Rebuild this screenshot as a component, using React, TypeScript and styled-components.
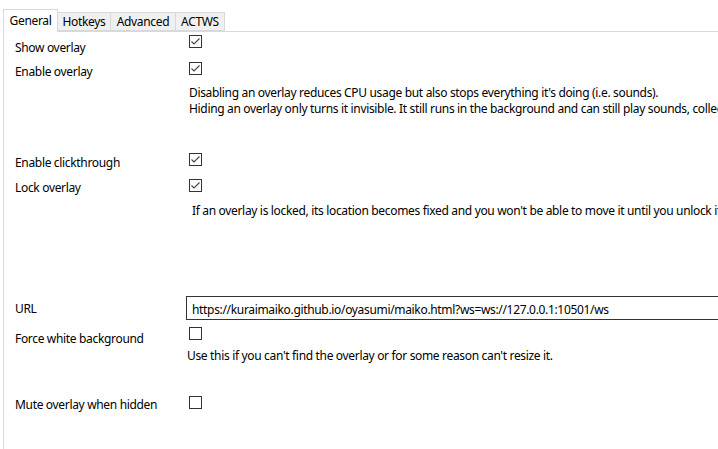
import React from "react";
import styled, { createGlobalStyle } from "styled-components";

const Global = createGlobalStyle`
  html, body { margin: 0; padding: 0; background: #ffffff; }
  body {
    font-family: "Noto Sans", "Open Sans", sans-serif;
    font-size: 12px;
    letter-spacing: -0.33px;
    color: #000;
    overflow: hidden;
  }
`;

const Window = styled.div`
  width: 718px;
  height: 449px;
  overflow: hidden;
  display: flex;
  flex-direction: column;
`;

const TabStrip = styled.div`
  display: flex;
  align-items: flex-end;
  height: 31px;
  padding-left: 3px;
  box-sizing: border-box;
`;

const Tab = styled.div<{ $active?: boolean; $first?: boolean; $w: number }>`
  position: relative;
  box-sizing: border-box;
  height: ${(p) => (p.$active ? 23 : 19)}px;
  width: ${(p) => p.$w}px;
  margin-left: ${(p) => (p.$first ? 0 : -1)}px;
  margin-bottom: ${(p) => (p.$active ? -1 : 0)}px;
  border: 1px solid #d9d9d9;
  border-bottom: ${(p) => (p.$active ? "none" : "1px solid #d9d9d9")};
  background: ${(p) => (p.$active ? "#ffffff" : "#f0f0f0")};
  z-index: ${(p) => (p.$active ? 2 : 1)};
  display: flex;
  justify-content: center;
  align-items: ${(p) => (p.$active ? "flex-start" : "center")};
  padding-top: ${(p) => (p.$active ? 3 : 1)}px;
  line-height: 16px;
  white-space: nowrap;
`;

const Panel = styled.div`
  flex: 1;
  margin-left: 3px;
  border-left: 1px solid #d9d9d9;
  border-top: 1px solid #d9d9d9;
  padding-left: 11px;
  position: relative;
  z-index: 1;
`;

const Row = styled.div<{ $h: number }>`
  display: grid;
  grid-template-columns: 174px 1fr;
  align-items: start;
  height: ${(p) => p.$h}px;
`;

const Label = styled.div<{ $dy: number }>`
  margin-top: ${(p) => p.$dy}px;
  line-height: 16px;
  white-space: nowrap;
`;

const Note = styled.div<{ $dy: number; $dx?: number }>`
  grid-column: 2;
  margin-top: ${(p) => p.$dy}px;
  margin-left: ${(p) => p.$dx ?? 0}px;
  line-height: 16px;
  white-space: nowrap;
`;

const CheckBox = styled.div<{ $dy: number }>`
  margin-top: ${(p) => p.$dy}px;
  width: 13px;
  height: 13px;
  box-sizing: border-box;
  border: 1px solid #333333;
  background: #ffffff;
  display: flex;
  align-items: center;
  justify-content: center;
`;

const TextBox = styled.div<{ $dy: number }>`
  margin-top: ${(p) => p.$dy}px;
  margin-left: -3px;
  height: 24px;
  width: 560px;
  box-sizing: border-box;
  border: 1px solid #333333;
  padding: 3px 0 0 5px;
  line-height: 19px;
  white-space: nowrap;
`;

const Check = ({ checked, dy }: { checked?: boolean; dy: number }) => (
  <CheckBox $dy={dy}>
    {checked && (
      <svg width="11" height="11" viewBox="0 0 11 11">
        <path d="M1.5 5.5 L4 8 L9.5 2.5" fill="none" stroke="#444" strokeWidth="1.1" />
      </svg>
    )}
  </CheckBox>
);

export default function App() {
  return (
    <Window>
      <Global />
      <TabStrip>
        <Tab $active $first $w={55}>General</Tab>
        <Tab $w={54}>Hotkeys</Tab>
        <Tab $w={66}>Advanced</Tab>
        <Tab $w={50}>ACTWS</Tab>
      </TabStrip>
      <Panel>
        <Row $h={24}>
          <Label $dy={8}>Show overlay</Label>
          <Check checked dy={3} />
        </Row>
        <Row $h={24}>
          <Label $dy={8}>Enable overlay</Label>
          <Check checked dy={6} />
        </Row>
        <Row $h={66}>
          <Note $dy={5}>
            Disabling an overlay reduces CPU usage but also stops everything it's doing (i.e. sounds).
            <br />
            Hiding an overlay only turns it invisible. It still runs in the background and can still play sounds, collect data and so on.
          </Note>
        </Row>
        <Row $h={24}>
          <Label $dy={9}>Enable clickthrough</Label>
          <Check checked dy={7} />
        </Row>
        <Row $h={24}>
          <Label $dy={10}>Lock overlay</Label>
          <Check checked dy={9} />
        </Row>
        <Row $h={96}>
          <Note $dy={9} $dx={3}>
            If an overlay is locked, its location becomes fixed and you won't be able to move it until you unlock it again.
          </Note>
        </Row>
        <Row $h={32}>
          <Label $dy={11}>URL</Label>
          <TextBox $dy={6}>https://kuraimaiko.github.io/oyasumi/maiko.html?ws=ws://127.0.0.1:10501/ws</TextBox>
        </Row>
        <Row $h={18}>
          <Label $dy={9}>Force white background</Label>
          <Check dy={5} />
        </Row>
        <Row $h={48}>
          <Note $dy={8} $dx={-2}>
            Use this if you can't find the overlay or for some reason can't resize it.
          </Note>
        </Row>
        <Row $h={30}>
          <Label $dy={9}>Mute overlay when hidden</Label>
          <Check dy={8} />
        </Row>
      </Panel>
    </Window>
  );
}
